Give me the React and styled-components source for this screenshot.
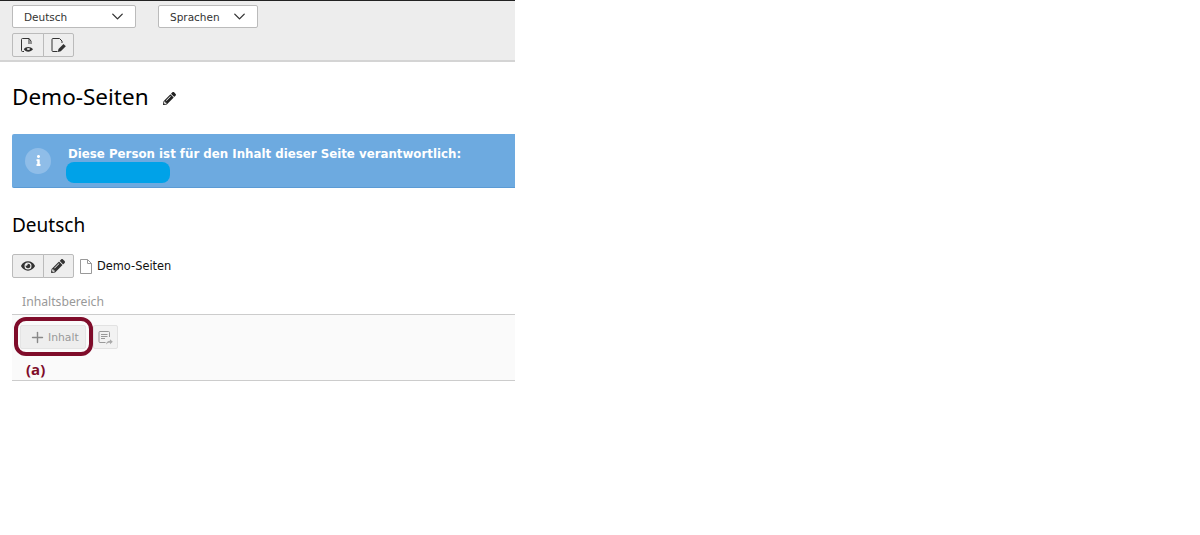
import React from 'react';
import styled, { createGlobalStyle } from 'styled-components';
import { FaEye, FaPencilAlt, FaInfo } from 'react-icons/fa';
import { FiChevronDown, FiPlus } from 'react-icons/fi';

const Global = createGlobalStyle`
  html, body { margin:0; padding:0; background:#fff; }
  body { font-family:"DejaVu Sans",Verdana,sans-serif; color:#000; }
`

const Page = styled.div`
  width:515px;
`

const Toolbar = styled.div`
  border-top:1px solid #222;
  border-bottom:2px solid #d4d4d4;
  background:#ededed;
  padding:4px 12px 0;
  height:55px;
  display:flex;
  flex-direction:column;
  gap:5px;
`

const SelectRow = styled.div`
  display:flex;
  gap:22px;
`

const Select = styled.div`
  box-sizing:border-box;
  width:${p => p.$w}px;
  height:23px;
  padding:0 8px 0 11px;
  background:#fff;
  border:1px solid #bbb;
  border-radius:2px;
  display:flex;
  align-items:center;
  justify-content:space-between;
  font-size:10.5px;
  color:#333;
  svg { font-size:19px; color:#333; stroke-width:1.7; }
`

const BtnGroup = styled.div`
  display:flex;
  width:62px;
  height:24px;
`

const GroupBtn = styled.div`
  box-sizing:border-box;
  flex:1;
  display:flex;
  align-items:center;
  justify-content:center;
  background:#eee;
  border:1px solid #bbb;
  margin-left:${p => p.$join ? '-1px' : '0'};
  border-radius:${p => p.$join ? '0 2px 2px 0' : '2px 0 0 2px'};
  color:#333;
  font-size:14px;
`

const Content = styled.div`
  padding-left:12px;
`

const Title = styled.h1`
  margin:18px 0 0;
  height:33px;
  display:flex;
  align-items:center;
  gap:14px;
  font:400 22.5px/33px "Noto Sans",sans-serif;
  color:#000;
  svg { font-size:13px; color:#222; margin-top:4px; }
`

const Callout = styled.div`
  box-sizing:border-box;
  margin-top:21px;
  height:54px;
  background:#6daae0;
  border-bottom:1px solid #5b9bd5;
  border-radius:2px 0 0 2px;
  padding:0 0 0 13px;
  display:flex;
  align-items:center;
  gap:17px;
`

const InfoCircle = styled.div`
  width:26px;
  height:26px;
  border-radius:50%;
  background:#8fbde8;
  color:#fff;
  display:flex;
  align-items:center;
  justify-content:center;
  font-size:11px;
  flex:none;
`

const CalloutBody = styled.div`
  display:flex;
  flex-direction:column;
  font-size:11.8px;
  font-weight:700;
  color:#fff;
  line-height:14px;
  padding-top:9px;
`

const Blob = styled.div`
  width:104px;
  height:21px;
  margin:1px 0 0 -2px;
  border-radius:8px;
  background:#00a2e8;
`

const Lang = styled.h2`
  margin:25px 0 0;
  font:400 19px/24px "Noto Sans",sans-serif;
`

const PageRow = styled.div`
  margin-top:17px;
  display:flex;
  align-items:center;
  height:24px;
  font-size:11.4px;
  color:#111;
`

const PageName = styled.span`
  margin-left:5px;
`

const PageIcon = styled.svg`
  width:12px;
  height:15px;
  margin-left:6px;
`

const ColName = styled.div`
  padding:14px 0 0 10px;
  height:22px;
  font:400 12.2px/20px "Noto Sans",sans-serif;
  color:#999;
`

const Column = styled.div`
  position:relative;
  box-sizing:border-box;
  height:67px;
  border-top:1px solid #ccc;
  border-bottom:1px solid #ccc;
  background:#fafafa;
  padding:10px 0 0 8px;
  display:flex;
  align-items:flex-start;
  gap:7px;
`

const AddBtn = styled.div`
  box-sizing:border-box;
  width:66px;
  height:24px;
  background:#eee;
  border:1px solid #e4e4e4;
  border-radius:2px;
  padding-left:8px;
  display:flex;
  align-items:center;
  gap:2px;
  font-size:10.8px;
  color:#999;
  svg { font-size:17px; color:#888; }
`

const PasteBtn = styled.div`
  box-sizing:border-box;
  width:25px;
  height:24px;
  border:1px solid #e2e2e2;
  background:#f2f2f2;
  border-radius:2px;
  display:flex;
  align-items:center;
  justify-content:center;
`

const Ring = styled.div`
  position:absolute;
  left:2px;
  top:2px;
  width:79px;
  height:39px;
  box-sizing:border-box;
  border:4.5px solid #7f0c2a;
  border-radius:12px;
`

const Mark = styled.div`
  position:absolute;
  left:14px;
  top:44px;
  font:700 15px/20px "Open Sans","Noto Sans",sans-serif;
  color:#7f0c2a;
`

const DocView = () => (
  <svg width="15" height="16" viewBox="0 0 15 16" fill="none">
    <path d="M9 7V1.500H2.500a1 1 0 0 0-1 1v11a1 1 0 0 0 1 1H4M7 1.500h2l2 2.500V7" stroke="#333" />
    <path d="M3.800 12.300c1.800-3.200 7-3.200 9.200 0-2.200 3.200-7.400 3.200-9.200 0z" fill="#333" />
    <ellipse cx="8.400" cy="12" rx="1.600" ry="1.100" fill="#ddd" />
  </svg>
)

const DocEdit = () => (
  <svg width="15" height="16" viewBox="0 0 15 16" fill="none">
    <path d="M8.500 1.500H2a1 1 0 0 0-1 1v11a1 1 0 0 0 1 1h4.500M8.500 1.500l2.500 2.500v2" stroke="#333" />
    <path d="M6.800 15l.7-3 5-5 2.300 2.300-5 5z" fill="#333" />
  </svg>
)

const PasteIcon = () => (
  <svg width="15" height="15" viewBox="0 0 15 15" fill="none">
    <path d="M7.500 12.500H2a1 1 0 0 1-1-1v-9a1 1 0 0 1 1-1h8.500a1 1 0 0 1 1 1V7" stroke="#999" />
    <path d="M3 4.500h6.500M3 6.500h6.500M3 8.500h4" stroke="#999" />
    <path d="M8 14.500c.4-2.600 1.800-3.700 4-3.700V9.200l2.800 2.500-2.800 2.500v-1.500c-1.500 0-3 .3-4 1.800z" fill="#aaa" />
  </svg>
)

export default function App() {
  return (
    <Page>
      <Global />
      <Toolbar>
        <SelectRow>
          <Select $w={124}>Deutsch<FiChevronDown /></Select>
          <Select $w={100}>Sprachen<FiChevronDown /></Select>
        </SelectRow>
        <BtnGroup>
          <GroupBtn><DocView /></GroupBtn>
          <GroupBtn $join><DocEdit /></GroupBtn>
        </BtnGroup>
      </Toolbar>
      <Content>
        <Title>Demo-Seiten <FaPencilAlt /></Title>
        <Callout>
          <InfoCircle><FaInfo /></InfoCircle>
          <CalloutBody>
            Diese Person ist für den Inhalt dieser Seite verantwortlich:
            <Blob />
          </CalloutBody>
        </Callout>
        <Lang>Deutsch</Lang>
        <PageRow>
          <BtnGroup>
            <GroupBtn><FaEye /></GroupBtn>
            <GroupBtn $join><FaPencilAlt /></GroupBtn>
          </BtnGroup>
          <PageIcon viewBox="0 0 12 15" fill="none">
            <path d="M.5.500h7l4 4v10H.5z" fill="#fff" stroke="#999" />
            <path d="M7.500.500v4h4" stroke="#999" />
          </PageIcon>
          <PageName>Demo-Seiten</PageName>
        </PageRow>
        <ColName>Inhaltsbereich</ColName>
        <Column>
          <AddBtn><FiPlus />Inhalt</AddBtn>
          <PasteBtn><PasteIcon /></PasteBtn>
          <Ring />
          <Mark>(a)</Mark>
        </Column>
      </Content>
    </Page>
  );
}
